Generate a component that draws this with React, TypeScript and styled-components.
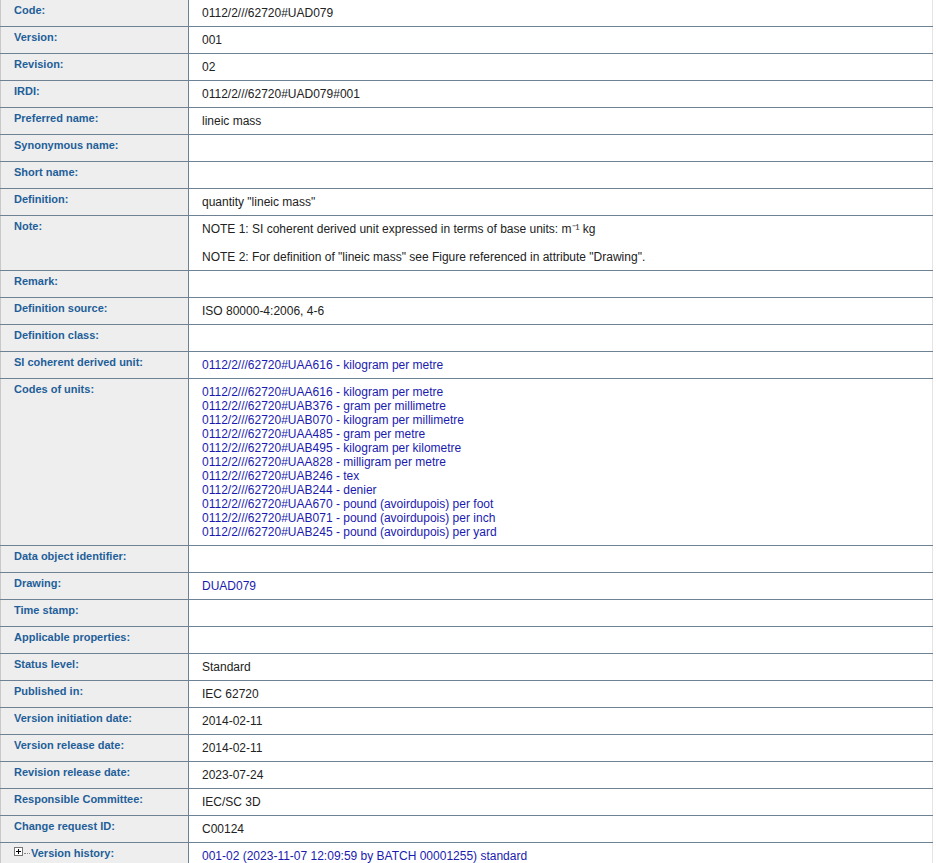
import React from "react";
import styled, { createGlobalStyle } from "styled-components";

const Global = createGlobalStyle`
  body { margin: 0; background: #fff; font-family: Arial, "Liberation Sans", sans-serif; }
`;

const Table = styled.table`
  width: 933px;
  border-collapse: collapse;
  border-right: 1px solid #e4e4e4;
  border-left: 1px solid #c8c8c8;
`;

const Row = styled.tr`
  border-bottom: 1px solid #6e8294;
`;

const Label = styled.td`
  width: 174px;
  background: #eeeeee;
  color: #1f5f99;
  font-weight: bold;
  font-size: 11px;
  line-height: 14px;
  padding: 3px 0 9px 13px;
  vertical-align: top;
  border-right: 1px solid #6e8294;
  white-space: nowrap;
`;

const Value = styled.td`
  font-size: 12px;
  line-height: 14px;
  color: #222;
  padding: 6px 13px;
  height: 14px;
  vertical-align: top;
`;

const Link = styled.span`
  color: #1a1ab0;
  display: block;
`;

const Plus = styled.span`
  display: inline-block;
  width: 7px;
  height: 7px;
  border: 1px solid #777;
  position: relative;
  margin: 0 1px 0 0;
  vertical-align: 1px;
  background: #fff;
  &::before { content: ""; position: absolute; left: 1px; right: 1px; top: 3px; height: 1px; background: #000; }
  &::after { content: ""; position: absolute; top: 1px; bottom: 1px; left: 3px; width: 1px; background: #000; }
`;

const Dots = styled.span`
  display: inline-block;
  width: 6px;
  border-top: 1px dotted #888;
  vertical-align: 3px;
  margin-right: 1px;
`;

const units = [
  "0112/2///62720#UAA616 - kilogram per metre",
  "0112/2///62720#UAB376 - gram per millimetre",
  "0112/2///62720#UAB070 - kilogram per millimetre",
  "0112/2///62720#UAA485 - gram per metre",
  "0112/2///62720#UAB495 - kilogram per kilometre",
  "0112/2///62720#UAA828 - milligram per metre",
  "0112/2///62720#UAB246 - tex",
  "0112/2///62720#UAB244 - denier",
  "0112/2///62720#UAA670 - pound (avoirdupois) per foot",
  "0112/2///62720#UAB071 - pound (avoirdupois) per inch",
  "0112/2///62720#UAB245 - pound (avoirdupois) per yard",
];

type R = [string, React.ReactNode];
const rows: R[] = [
  ["Code:", "0112/2///62720#UAD079"],
  ["Version:", "001"],
  ["Revision:", "02"],
  ["IRDI:", "0112/2///62720#UAD079#001"],
  ["Preferred name:", "lineic mass"],
  ["Synonymous name:", ""],
  ["Short name:", ""],
  ["Definition:", 'quantity "lineic mass"'],
  ["Note:", <>NOTE 1: SI coherent derived unit expressed in terms of base units: m⁻¹ kg<br /><br />NOTE 2: For definition of "lineic mass" see Figure referenced in attribute "Drawing".</>],
  ["Remark:", ""],
  ["Definition source:", "ISO 80000-4:2006, 4-6"],
  ["Definition class:", ""],
  ["SI coherent derived unit:", <Link>0112/2///62720#UAA616 - kilogram per metre</Link>],
  ["Codes of units:", <>{units.map((u) => <Link key={u}>{u}</Link>)}</>],
  ["Data object identifier:", ""],
  ["Drawing:", <Link>DUAD079</Link>],
  ["Time stamp:", ""],
  ["Applicable properties:", ""],
  ["Status level:", "Standard"],
  ["Published in:", "IEC 62720"],
  ["Version initiation date:", "2014-02-11"],
  ["Version release date:", "2014-02-11"],
  ["Revision release date:", "2023-07-24"],
  ["Responsible Committee:", "IEC/SC 3D"],
  ["Change request ID:", "C00124"],
];

export default function App() {
  return (
    <>
      <Global />
      <Table>
        <tbody>
          {rows.map(([l, v]) => (
            <Row key={l}>
              <Label>{l}</Label>
              <Value>{v}</Value>
            </Row>
          ))}
          <Row>
            <Label><Plus /><Dots />Version history:</Label>
            <Value><Link>001-02 (2023-11-07 12:09:59 by BATCH 00001255) standard</Link></Value>
          </Row>
        </tbody>
      </Table>
    </>
  );
}
